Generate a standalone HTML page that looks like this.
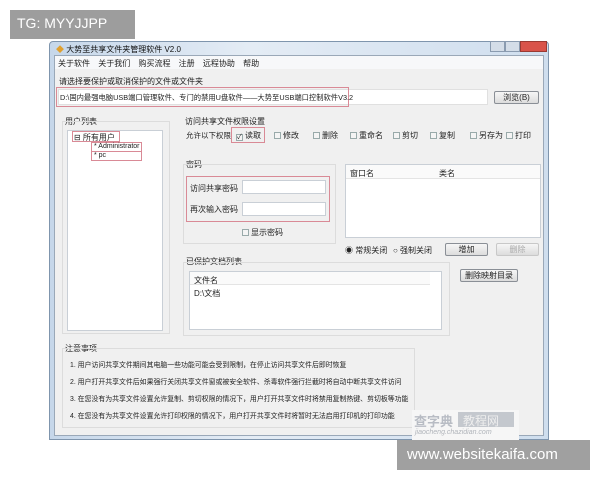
<!DOCTYPE html>
<html><head><meta charset="utf-8"><style>
*{margin:0;padding:0;box-sizing:border-box}
body{width:600px;height:480px;background:#fff;position:relative;overflow:hidden;font-family:"Liberation Sans","Noto Sans CJK SC",sans-serif;font-size:8px;color:#222}
.a{position:absolute;white-space:nowrap}
.box{position:absolute}
.red{position:absolute;border:1px solid #d98a96}
.inp{position:absolute;background:#fff;border:1px solid #c9cfd6}
.cb{display:inline-block;width:7px;height:7px;border:1px solid #9aa;background:#f4f4f4;vertical-align:-1px;margin-right:2px}
.btn{position:absolute;border:1px solid #8a8f96;border-radius:2px;background:linear-gradient(#f6f6f6,#dcdcdc);text-align:center;line-height:11px}
.grp{position:absolute;border:1px solid #dcdcdc}
</style></head><body>
<div class="box" style="left:10px;top:10px;width:125px;height:29px;background:#9d9d9d"></div>
<div class="a" style="left:17px;top:15px;font-size:14px;color:#fff">TG: MYYJJPP</div>

<div class="box" style="left:49px;top:41px;width:500px;height:399px;background:linear-gradient(90deg,#c6d7ea,#e4ecf5 40%,#cfdeee);border:1px solid #7f95ad;border-radius:4px 4px 0 0"></div>
<div class="a" style="left:56px;top:44px;font-size:8px;color:#111"><span style="color:#e0a030">◆</span> 大势至共享文件夹管理软件 V2.0</div>
<div class="box" style="left:490px;top:41px;width:15px;height:11px;background:#d4dde8;border:1px solid #8a9bb0"></div>
<div class="box" style="left:505px;top:41px;width:15px;height:11px;background:#d4dde8;border:1px solid #8a9bb0"></div>
<div class="box" style="left:520px;top:41px;width:27px;height:11px;background:#d9534a;border:1px solid #9a3a33"></div>
<div class="box" style="left:54px;top:55px;width:490px;height:381px;background:#f0f0f0;border:1px solid #9aa8b8"></div>
<div class="box" style="left:55px;top:56px;width:488px;height:13px;background:#f7f8fa"></div>
<div class="a" style="left:58px;top:58px;word-spacing:6px">关于软件 关于我们 购买流程 注册 远程协助 帮助</div>
<div class="a" style="left:59px;top:76px">请选择要保护或取消保护的文件或文件夹</div>
<div class="inp" style="left:58px;top:89px;width:430px;height:16px;border-color:#e0e0e0"></div>
<div class="red" style="left:56px;top:87px;width:293px;height:20px"></div>
<div class="a" style="left:60px;top:93px;font-size:7.3px">D:\国内最强电脑USB端口管理软件、专门的禁用U盘软件——大势至USB端口控制软件V3.2</div>
<div class="btn" style="left:494px;top:91px;width:45px;height:13px">浏览(B)</div>

<div class="a" style="left:65px;top:116px">用户列表</div>
<div class="grp" style="left:62px;top:121px;width:108px;height:213px"></div>
<div class="inp" style="left:67px;top:130px;width:96px;height:201px"></div>
<div class="red" style="left:72px;top:131px;width:48px;height:11px"></div>
<div class="a" style="left:74px;top:132px">⊟ 所有用户</div>
<div class="red" style="left:91px;top:142px;width:51px;height:10px"></div>
<div class="a" style="left:94px;top:143px;font-size:7px">* Administrator</div>
<div class="red" style="left:91px;top:151px;width:51px;height:10px"></div>
<div class="a" style="left:94px;top:152px;font-size:7px">* pc</div>

<div class="a" style="left:185px;top:116px">访问共享文件权限设置</div>
<div class="a" style="left:186px;top:130px;font-size:7.5px">允许以下权限</div>
<div class="red" style="left:231px;top:127px;width:34px;height:16px"></div>
<div class="a" style="left:236px;top:130px"><span class="cb" style="font-size:7px;line-height:5px">✓</span>读取</div>
<div class="a" style="left:274px;top:130px"><span class="cb"></span>修改</div>
<div class="a" style="left:313px;top:130px"><span class="cb"></span>删除</div>
<div class="a" style="left:350px;top:130px"><span class="cb"></span>重命名</div>
<div class="a" style="left:393px;top:130px"><span class="cb"></span>剪切</div>
<div class="a" style="left:430px;top:130px"><span class="cb"></span>复制</div>
<div class="a" style="left:470px;top:130px"><span class="cb"></span>另存为</div>
<div class="a" style="left:506px;top:130px"><span class="cb"></span>打印</div>

<div class="a" style="left:186px;top:159px">密码</div>
<div class="grp" style="left:183px;top:164px;width:153px;height:80px"></div>
<div class="red" style="left:186px;top:176px;width:144px;height:46px"></div>
<div class="a" style="left:190px;top:183px">访问共享密码</div>
<div class="a" style="left:190px;top:204px">再次输入密码</div>
<div class="inp" style="left:242px;top:180px;width:84px;height:14px"></div>
<div class="inp" style="left:242px;top:202px;width:84px;height:14px"></div>
<div class="a" style="left:242px;top:227px"><span class="cb"></span>显示密码</div>

<div class="inp" style="left:345px;top:164px;width:196px;height:74px"></div>
<div class="box" style="left:346px;top:165px;width:194px;height:14px;background:#fafafa;border-bottom:1px solid #e4e4e4"></div>
<div class="a" style="left:350px;top:168px">窗口名</div>
<div class="a" style="left:439px;top:168px">类名</div>
<div class="a" style="left:345px;top:245px">◉ 常规关闭</div>
<div class="a" style="left:393px;top:245px">○ 强制关闭</div>
<div class="btn" style="left:445px;top:243px;width:43px;height:13px">增加</div>
<div class="btn" style="left:496px;top:243px;width:43px;height:13px;color:#aaa;border-color:#c8c8c8">删除</div>

<div class="a" style="left:186px;top:256px">已保护文档列表</div>
<div class="grp" style="left:183px;top:262px;width:267px;height:74px"></div>
<div class="inp" style="left:189px;top:271px;width:253px;height:59px"></div>
<div class="box" style="left:190px;top:272px;width:240px;height:13px;background:#fafafa;border-bottom:1px solid #e4e4e4"></div>
<div class="a" style="left:194px;top:275px">文件名</div>
<div class="a" style="left:194px;top:288px">D:\文档</div>
<div class="btn" style="left:460px;top:269px;width:58px;height:13px">删除映射目录</div>

<div class="a" style="left:65px;top:343px">注意事项</div>
<div class="grp" style="left:62px;top:348px;width:353px;height:80px"></div>
<div class="a" style="left:70px;top:359px;font-size:6.9px">1. 用户访问共享文件期间其电脑一些功能可能会受到限制，在停止访问共享文件后即时恢复</div>
<div class="a" style="left:70px;top:376px;font-size:6.9px">2. 用户打开共享文件后如果强行关闭共享文件窗或被安全软件、杀毒软件强行拦截时将自动中断共享文件访问</div>
<div class="a" style="left:70px;top:393px;font-size:6.9px">3. 在您没有为共享文件设置允许复制、剪切权限的情况下，用户打开共享文件时将禁用复制热键、剪切板等功能</div>
<div class="a" style="left:70px;top:410px;font-size:6.9px">4. 在您没有为共享文件设置允许打印权限的情况下，用户打开共享文件时将暂时无法启用打印机的打印功能</div>

<div class="box" style="left:412px;top:410px;width:107px;height:30px;background:#f6f6f6"></div>
<div class="a" style="left:414px;top:411px;font-size:13px;color:#b8bcc4;font-weight:bold">查字典</div>
<div class="box" style="left:458px;top:412px;width:56px;height:15px;background:#c4c8ce"></div>
<div class="a" style="left:463px;top:412px;font-size:12px;color:#eee">教程网</div>
<div class="a" style="left:415px;top:429px;font-size:7px;color:#b0b4ba;font-style:italic">jiaocheng.chazidian.com</div>

<div class="box" style="left:397px;top:440px;width:193px;height:30px;background:#a0a0a0"></div>
<div class="a" style="left:407px;top:446px;font-size:15px;color:#fff">www.websitekaifa.com</div>
</body></html>
